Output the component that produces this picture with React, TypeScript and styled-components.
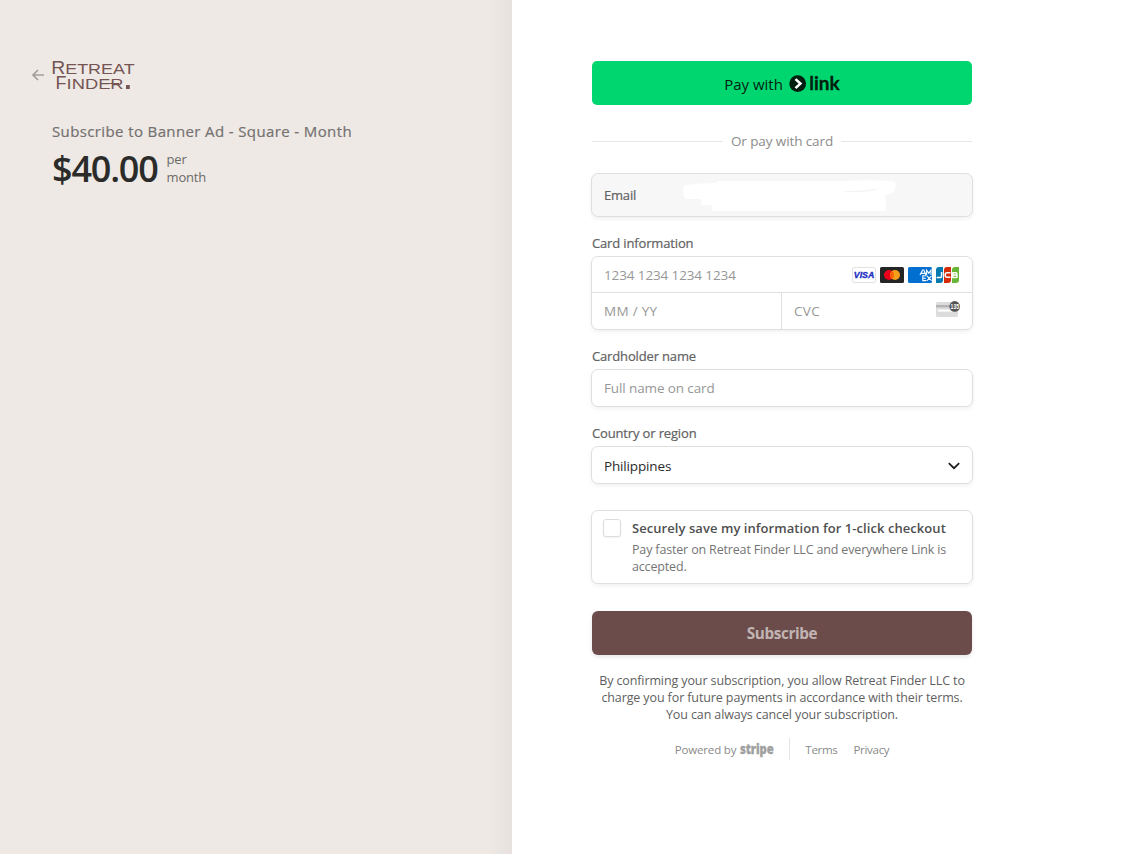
import React from "react";
import styled, { createGlobalStyle, css } from "styled-components";

function RetreatFinderLogo() {
  return (
    <svg width="84" height="32" viewBox="0 0 84 32" fill="#755554">
      <g fontFamily='"Liberation Sans", Arial, sans-serif'>
        <text x="-0.8" y="15" fontSize="18" textLength="14" lengthAdjust="spacingAndGlyphs">
          R
        </text>
        <text x="13.2" y="15" fontSize="15" textLength="69.4" lengthAdjust="spacingAndGlyphs">
          ETREAT
        </text>
        <text x="3.6" y="30" fontSize="18">F</text>
        <text x="14.6" y="30" fontSize="15" textLength="57" lengthAdjust="spacingAndGlyphs">
          INDER
        </text>
      </g>
      <path d="M50 24.5h17" stroke="#755554" strokeWidth="1" />
      <rect x="74" y="26" width="3.8" height="4" />
    </svg>
  );
}

function LinkLogo() {
  return (
    <svg width="51" height="20" viewBox="0 0 51 20">
      <circle cx="8.7" cy="9.6" r="8.4" fill="#011e0f" />
      <path d="M6.5 5.1l4.9 4.5-4.9 4.5" fill="none" stroke="#fff" strokeWidth="2.6" />
      <text
        x="20.2"
        y="16.3"
        fill="#011e0f"
        fontFamily="Lato, sans-serif"
        fontWeight="700"
        fontSize="19"
        stroke="#011e0f"
        strokeWidth="0.3"
        textLength="30.5"
        lengthAdjust="spacingAndGlyphs"
      >
        link
      </text>
    </svg>
  );
}

function StripeLogo() {
  return (
    <svg width="34" height="18" viewBox="0 0 34 18">
      <text
        x="0"
        y="13"
        fill="#a0a0a0"
        stroke="#a0a0a0"
        strokeWidth="0.3"
        fontFamily='"Open Sans", sans-serif'
        fontWeight="800"
        fontSize="13.5"
        textLength="33.5"
        lengthAdjust="spacingAndGlyphs"
      >
        stripe
      </text>
    </svg>
  );
}

function VisaIcon() {
  return (
    <svg width="24" height="16" viewBox="0 0 24 16">
      <rect x="0.5" y="0.5" width="23" height="15" rx="1.5" fill="#fff" stroke="#e2e2e2" />
      <text
        x="1.8"
        y="11"
        fill="#1a2bc3"
        stroke="#1a2bc3"
        strokeWidth="0.3"
        fontFamily='"Liberation Sans", sans-serif'
        fontStyle="italic"
        fontWeight="700"
        fontSize="8.6"
        textLength="20.4"
        lengthAdjust="spacingAndGlyphs"
      >
        VISA
      </text>
    </svg>
  );
}

function MastercardIcon() {
  return (
    <svg width="24" height="16" viewBox="0 0 24 16">
      <rect width="24" height="16" rx="1.5" fill="#252525" />
      <circle cx="9" cy="8" r="5" fill="#eb001b" />
      <circle cx="15" cy="8" r="5" fill="#f79e1b" />
      <path d="M12 4a5 5 0 0 1 0 8a5 5 0 0 1 0-8z" fill="#ff5f00" />
    </svg>
  );
}

function AmexIcon() {
  return (
    <svg width="24" height="16" viewBox="0 0 24 16">
      <rect width="24" height="16" rx="1.5" fill="#016fd0" />
      <g fill="none" stroke="#fff" strokeWidth="1.1">
        <path d="M12 8l2.6-5h1.2L18 8M13.4 6.4h3.4M18.6 8V3.2l2.2 3 2.2-3V8" />
        <path d="M18.4 8.8h-3.6v4.8h3.6M14.8 11.2h3M19 8.8l4.6 4.8M23.6 8.8L19 13.6" />
      </g>
    </svg>
  );
}

function JcbIcon() {
  return (
    <svg width="24" height="16" viewBox="0 0 24 16">
      <path d="M3 0h4v13a3 3 0 0 1-3 3H0V3a3 3 0 0 1 3-3z" fill="#047ab1" />
      <path d="M11 0h4v13a3 3 0 0 1-3 3H8V3a3 3 0 0 1 3-3z" fill="#d42d06" />
      <path d="M19 0h4v13a3 3 0 0 1-3 3h-4V3a3 3 0 0 1 3-3z" fill="#67b637" />
      <g fill="none" stroke="#fff" strokeWidth="1.5">
        <path d="M5.6 5v4.2a1.3 1.3 0 0 1-1.4 1.3H0.6" />
        <path d="M14.4 5.8h-3.2a2 2 0 0 0-2 2v.4a2 2 0 0 0 2 2h3.2" />
        <path d="M16.8 5.7h3a1.1 1.1 0 0 1 0 2.3h-3M16.8 8h3.2a1.1 1.1 0 0 1 0 2.4h-3.2V5.2" />
      </g>
    </svg>
  );
}

function CvcIcon() {
  return (
    <svg width="24" height="17" viewBox="0 0 24 17">
      <rect x="0" y="1" width="22" height="15" rx="1.5" fill="#dcdcdc" />
      <rect x="0" y="4" width="22" height="2.4" fill="#b4b4b4" />
      <rect x="2" y="8.6" width="15" height="2" fill="#fff" />
      <circle cx="18.7" cy="5.4" r="5.3" fill="#545454" />
      <text
        x="14.6"
        y="7.9"
        fill="#fff"
        fontFamily='"Liberation Sans", sans-serif'
        fontWeight="700"
        fontSize="7"
        textLength="8.4"
        lengthAdjust="spacingAndGlyphs"
      >
        135
      </text>
    </svg>
  );
}

function App() {
  return (
    <>
      <GlobalStyle />
      <PageStyle>
        <SummaryStyle>
          <BrandStyle>
            <svg width="12" height="12" viewBox="0 0 12 12" fill="none" stroke="#a39f9d" strokeWidth="1.7">
              <path d="M12 6H1M6 1L1 6l5 5" />
            </svg>
            <RetreatFinderLogo />
          </BrandStyle>
          <ProductStyle>
            <h1>Subscribe to Banner Ad - Square - Month</h1>
            <div className="price">
              <strong>$40.00</strong>
              <span>
                per
                <br />
                month
              </span>
            </div>
          </ProductStyle>
        </SummaryStyle>

        <PaymentStyle>
          <FormStyle>
            <LinkButton type="button">
              Pay with
              <LinkLogo />
            </LinkButton>
            <DividerStyle>Or pay with card</DividerStyle>

            <EmailStyle>
              <span>Email</span>
              <svg width="214" height="34" viewBox="0 0 214 34" fill="#fff">
                <path d="M2 6Q18 4 34 4V2H160C180 1 200 1 212 3Q214 9 210 13L202 17V20Q204 21 203 22V32H29V26H18V20H4Q0 19 0 13Q0 7 2 6Z" />
                <path d="M162 12Q182 12 198 9Q188 14 162 13Z" fill="#f4f4f4" />
              </svg>
            </EmailStyle>

            <Label>Card information</Label>
            <CardBoxStyle>
              <Cell>
                <Placeholder>1234 1234 1234 1234</Placeholder>
                <div className="brands">
                  <VisaIcon />
                  <MastercardIcon />
                  <AmexIcon />
                  <JcbIcon />
                </div>
              </Cell>
              <div className="split">
                <Cell>
                  <Placeholder $wide>MM / YY</Placeholder>
                </Cell>
                <Cell $divided>
                  <Placeholder $wide>CVC</Placeholder>
                  <CvcIcon />
                </Cell>
              </div>
            </CardBoxStyle>

            <Label>Cardholder name</Label>
            <InputBox>
              <Placeholder>Full name on card</Placeholder>
            </InputBox>

            <Label>Country or region</Label>
            <InputBox $filled>
              <span>Philippines</span>
              <svg width="12" height="12" viewBox="0 0 12 12" fill="none" stroke="#1a1a1a" strokeWidth="1.7">
                <path d="M0.8 3.2L6 8.2l5.2-5" />
              </svg>
            </InputBox>

            <SaveInfoStyle>
              <Checkbox />
              <div>
                <h2>Securely save my information for 1-click checkout</h2>
                <p>
                  Pay faster on Retreat Finder LLC and everywhere Link is
                  <br />
                  accepted.
                </p>
              </div>
            </SaveInfoStyle>

            <SubscribeButton type="button">Subscribe</SubscribeButton>

            <TermsStyle>
              By confirming your subscription, you allow Retreat Finder LLC to
              <br />
              charge you for future payments in accordance with their terms.
              <br />
              You can always cancel your subscription.
            </TermsStyle>

            <FooterStyle>
              <div className="powered">
                Powered by
                <StripeLogo />
              </div>
              <nav>
                <a>Terms</a>
                <a>Privacy</a>
              </nav>
            </FooterStyle>
          </FormStyle>
        </PaymentStyle>
      </PageStyle>
    </>
  );
}

export default App;

const GlobalStyle = createGlobalStyle`
  * {
    box-sizing: border-box;
  }

  body {
    margin: 0;
    background: #fff;
    font-family: "Open Sans", "Noto Sans", sans-serif;
  }

  h1, h2, p {
    margin: 0;
  }

  svg {
    display: block;
    flex-shrink: 0;
    overflow: visible;
  }
`;

const boxStyle = css`
  margin: 0 -1px;
  border: 1px solid #dfdfdf;
  border-radius: 7px;
  background: #fff;
  box-shadow: 0 2px 4px rgba(0, 0, 0, 0.06);
`;

const mediumText = css`
  font-weight: 500;
  -webkit-text-stroke: 0.2px currentColor;
`;

const PageStyle = styled.div`
  display: flex;
  height: 854px;
  overflow: hidden;
`;

const SummaryStyle = styled.aside`
  width: 512px;
  padding: 59px 0 0 32px;
  background: linear-gradient(to right, rgba(0, 0, 0, 0) 488px, rgba(0, 0, 0, 0.03) 512px) #eee9e5;
`;

const BrandStyle = styled.div`
  display: flex;
  align-items: center;
  gap: 8px;
  height: 32px;
`;

const ProductStyle = styled.div`
  padding: 29px 0 0 20px;

  h1 {
    ${mediumText}
    font-size: 15px;
    line-height: 23px;
    letter-spacing: 0.38px;
    color: #747170;
  }

  .price {
    display: flex;
    align-items: center;
    gap: 9px;
    height: 50px;
  }

  strong {
    padding-top: 2px;
    font-size: 36px;
    font-weight: 600;
    line-height: 50px;
    letter-spacing: -1.2px;
    color: #2b2b2a;
  }

  span {
    font-size: 13px;
    font-weight: 500;
    line-height: 18px;
    letter-spacing: -0.2px;
    color: #6b6967;
  }
`;

const PaymentStyle = styled.main`
  flex: 1;
  padding: 61px 0 0 80px;
`;

const FormStyle = styled.div`
  display: flex;
  flex-direction: column;
  width: 380px;
`;

const LinkButton = styled.button`
  display: flex;
  align-items: center;
  justify-content: center;
  gap: 6px;
  height: 44px;
  padding: 2px 0 0;
  border: 0;
  border-radius: 5px;
  background: #00d66f;
  color: #011e0f;
  font-family: inherit;
  font-size: 15px;
`;

const DividerStyle = styled.div`
  display: flex;
  align-items: center;
  gap: 8px;
  height: 20px;
  margin: 26px 0 22px;
  font-size: 13.5px;
  letter-spacing: -0.1px;
  color: #8c8c8c;

  &::before,
  &::after {
    content: "";
    flex: 1;
    height: 1px;
    background: #e6e6e6;
  }
`;

const EmailStyle = styled.div`
  ${boxStyle}
  ${mediumText}
  display: flex;
  align-items: center;
  gap: 47px;
  height: 44px;
  padding-left: 12px;
  margin-bottom: 15px;
  background: #f7f7f7;
  font-size: 13px;
  letter-spacing: -0.2px;
  color: #626262;

  svg {
    margin-top: 2px;
  }
`;

const Label = styled.label`
  ${mediumText}
  height: 24px;
  font-size: 13px;
  line-height: 23px;
  letter-spacing: -0.15px;
  color: #626262;
`;

const Placeholder = styled.span<{ $wide?: boolean }>`
  font-size: 13.5px;
  letter-spacing: ${({ $wide }) => ($wide ? 0.3 : -0.12)}px;
  color: #979797;
`;

const CardBoxStyle = styled.div`
  ${boxStyle}
  height: 74px;
  margin-bottom: 15px;

  .brands {
    display: flex;
    gap: 4px;
  }

  .split {
    display: grid;
    grid-template-columns: 189px 1fr;
    border-top: 1px solid #dfdfdf;
  }
`;

const Cell = styled.div<{ $divided?: boolean }>`
  display: flex;
  align-items: center;
  justify-content: space-between;
  height: ${({ $divided }) => ($divided ? 36 : 35)}px;
  padding: 0 12px;
  border-left: ${({ $divided }) => ($divided ? "1px solid #dfdfdf" : "0")};

  > svg {
    margin-bottom: 3px;
  }
`;

const InputBox = styled.div<{ $filled?: boolean }>`
  ${boxStyle}
  display: flex;
  align-items: center;
  justify-content: space-between;
  height: 38px;
  padding: ${({ $filled }) => ($filled ? "1px 12px 0" : "0 12px")};
  margin-bottom: ${({ $filled }) => ($filled ? 26 : 15)}px;
  font-size: 13.5px;
  letter-spacing: -0.15px;
  color: #2b2b2b;
`;

const SaveInfoStyle = styled.div`
  ${boxStyle}
  display: flex;
  gap: 11px;
  height: 74px;
  padding: 8px 11px;
  margin-bottom: 27px;

  h2 {
    font-size: 13px;
    font-weight: 600;
    line-height: 18px;
    letter-spacing: 0.06px;
    color: #4f4f4f;
    white-space: nowrap;
  }

  p {
    margin-top: 4px;
    font-size: 12.5px;
    line-height: 17px;
    letter-spacing: -0.16px;
    color: #757575;
    white-space: nowrap;
  }
`;

const Checkbox = styled.div`
  flex-shrink: 0;
  width: 18px;
  height: 18px;
  border: 1px solid #dcdcdc;
  border-radius: 3px;
  background: #fff;
  box-shadow: 0 1px 2px rgba(0, 0, 0, 0.05);
`;

const SubscribeButton = styled.button`
  height: 44px;
  border: 0;
  border-radius: 6px;
  background: #6b4c4a;
  box-shadow: 0 2px 4px rgba(0, 0, 0, 0.1);
  color: #c1b4b3;
  font-family: inherit;
  font-size: 15.3px;
  font-weight: 700;
  letter-spacing: -0.4px;
`;

const TermsStyle = styled.p`
  padding-top: 17px;
  font-size: 12.5px;
  line-height: 17px;
  letter-spacing: -0.11px;
  text-align: center;
  color: #5f5f5f;
  white-space: nowrap;
`;

const FooterStyle = styled.footer`
  display: flex;
  align-items: center;
  justify-content: center;
  height: 22px;
  margin-top: 15px;
  font-size: 11.5px;
  letter-spacing: -0.15px;
  color: #8a8a8a;

  .powered {
    display: flex;
    align-items: center;
    gap: 4px;
    height: 22px;
    padding: 1px 15px 0 0;
    border-right: 1px solid #e4e4e4;
  }

  nav {
    display: flex;
    gap: 16px;
    padding: 1px 0 0 15px;
    letter-spacing: -0.3px;
    line-height: 22px;
  }
`;
